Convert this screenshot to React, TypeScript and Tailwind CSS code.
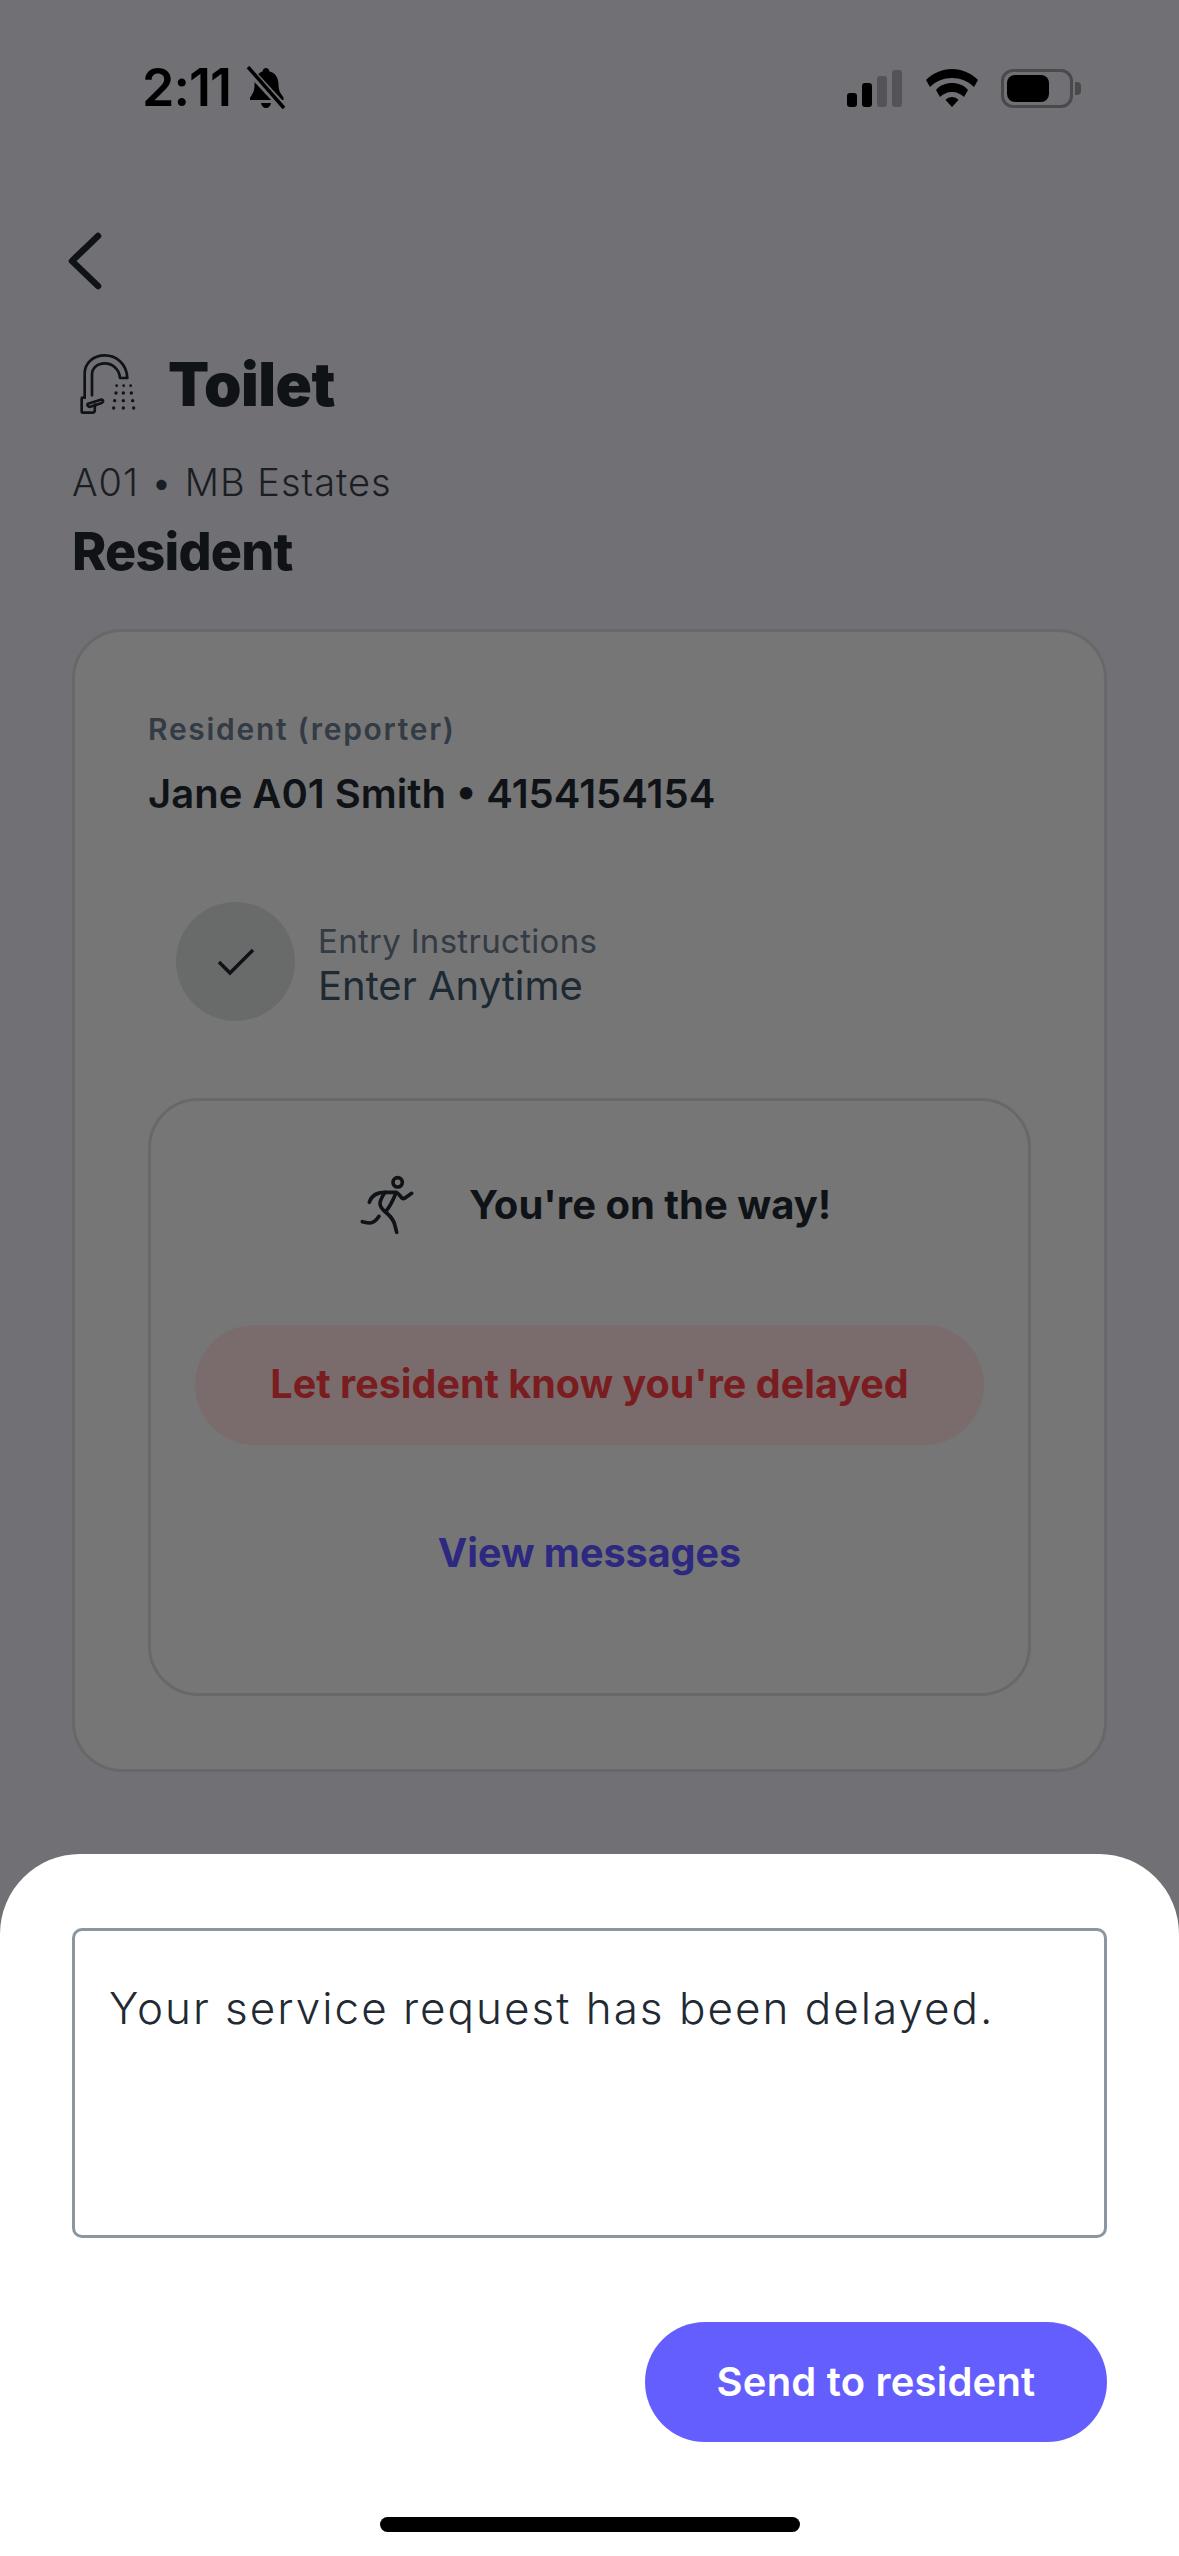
function BellOff() {
  return (
    <svg width="42" height="44" viewBox="0 0 42 44" fill="none">
      <path d="M21 2c2 0 3 1.500 3.500 3.500C31 7 33.500 12.500 33.500 19c0 5 1.500 8 5 12.500V34H5v-2.500C8.500 27 9.500 24 9.500 19c0-6.500 3-12 8-13.500C18 3.500 19 2 21 2z" fill="#000" />
      <path d="M16 37h10c-.5 3-2.500 5-5 5s-4.500-2-5-5z" fill="#000" />
      <path d="M3 3l36 39" stroke="#717075" strokeWidth="8" />
      <path d="M3 1l36 41" stroke="#000" strokeWidth="3.500" />
    </svg>
  )
}

function StatusIcons() {
  return (
    <div className="flex items-center">
      <div className="flex items-end gap-[5px] h-[37px]">
        <div className="w-[10px] h-[14px] rounded-[3px] bg-black" />
        <div className="w-[10px] h-[24px] rounded-[3px] bg-black" />
        <div className="w-[10px] h-[31px] rounded-[3px] bg-[#545458]" />
        <div className="w-[10px] h-[37px] rounded-[3px] bg-[#545458]" />
      </div>
      <svg className="ml-[24px]" width="52" height="38" viewBox="0 0 52 38" fill="#000">
        <path d="M26 0c10 0 19 4 26 11l-4 7C42 12 34 9 26 9S10 12 4 18l-4-7C7 4 16 0 26 0z" />
        <path d="M26 14c6 0 12 2 16 7l-4 7c-3-3-7-5-12-5s-9 2-12 5l-4-7c4-5 10-7 16-7z" />
        <path d="M26 28c2.500 0 5 1 6.500 3L26 38l-6.500-7c1.500-2 4-3 6.500-3z" />
      </svg>
      <div className="ml-[23px] flex items-center">
        <div className="w-[72px] h-[39px] rounded-[12px] border-[3px] border-[#4a4a4d] p-[3px]">
          <div className="w-[42px] h-full rounded-[8px] bg-black" />
        </div>
        <div className="ml-[2px] w-[6px] h-[13px] rounded-r-[4px] bg-[#4a4a4d]" />
      </div>
    </div>
  )
}

function BackChevron() {
  return (
    <svg width="36" height="58" viewBox="0 0 36 58" fill="none" stroke="#0f1317" strokeWidth="6.500" strokeLinecap="round" strokeLinejoin="round">
      <path d="M31 4L5 29l26 25" />
    </svg>
  )
}

function FaucetIcon() {
  return (
    <svg width="60" height="64" viewBox="110 75 180 192" fill="none" stroke="#0f1317" strokeWidth="8" strokeLinecap="round" strokeLinejoin="round">
      <path d="M130 212V140c0-32 26-55 60-55s66 24 68 68h-22c-2-26-22-44-46-44-22 0-38 14-38 34v62" />
      <path d="M130 212h-6c-2 0-3 1-3 3v38c0 2 1 4 4 4h30c2 0 4-2 5-4l1-20" />
      <path d="M140 230l38-12c5-1 8 2 7 5-1 3-3 5-6 6l-32 10c-6 2-12-6-7-9z" />
      <g fill="#0f1317" stroke="none">
        <circle cx="226" cy="176" r="4" /><circle cx="247" cy="176" r="4" /><circle cx="268" cy="176" r="4" />
        <circle cx="224" cy="198" r="5" /><circle cx="246" cy="198" r="5" /><circle cx="270" cy="198" r="5" />
        <circle cx="220" cy="221" r="5" /><circle cx="246" cy="221" r="5" /><circle cx="274" cy="221" r="5" />
        <circle cx="217" cy="243" r="5" /><circle cx="246" cy="243" r="5" /><circle cx="277" cy="243" r="5" />
      </g>
    </svg>
  )
}

function RunnerIcon() {
  return (
    <svg width="58" height="62" viewBox="112 75 174 186" fill="none" stroke="#0f1317" strokeWidth="11" strokeLinecap="round" strokeLinejoin="round">
      <circle cx="228" cy="100" r="14" />
      <path d="M143 160c6-20 22-30 47-30h32c6 0 10 6 16 14 4 5 8 6 12 3l20-14" />
      <path d="M190 130c-8 12-15 24-15 34 0 12 10 20 20 28 14 12 22 22 25 38l5 20" />
      <path d="M222 134c-8 20-18 40-30 54" />
      <path d="M172 202c-8 12-16 20-28 20-8 0-14-2-22-4" />
    </svg>
  )
}

export default function App() {
  return (
    <div className="relative w-[1179px] h-[2556px] overflow-hidden bg-[#717075] font-['Inter',sans-serif] text-[#0f1317]">
      <div className="flex items-center justify-between pl-[142px] pr-[98px] pt-[66px]">
        <div className="flex items-center gap-[14px]">
          <span className="font-semibold text-[52px] leading-[44px] tracking-[-1px] text-black">2:11</span>
          <BellOff />
        </div>
        <StatusIcons />
      </div>

      <div className="px-[72px]">
        <div className="mt-[122px] -ml-[5px]">
          <BackChevron />
        </div>

        <div className="mt-[62px] flex items-center gap-[30px] pl-[6px]">
          <FaucetIcon />
          <h1 className="font-black text-[60px] leading-[64px] tracking-[-0.5px]">Toilet</h1>
        </div>
        <p className="mt-[43px] text-[38px] leading-[46px] font-light tracking-[1px] text-[#1a1e23]">A01 • MB Estates</p>
        <h2 className="mt-[19px] font-extrabold text-[52px] leading-[56px] tracking-[-0.8px]">Resident</h2>

        <div className="mt-[49px] h-[1143px] rounded-[50px] border-[3px] border-[#67686a] bg-[#767676] px-[73px] pt-[78px]">
          <p className="font-semibold text-[30px] leading-[38px] tracking-[1.700px] text-[#333b45]">Resident (reporter)</p>
          <p className="mt-[22px] font-semibold text-[40px] leading-[48px]">Jane A01 Smith • 4154154154</p>

          <div className="mt-[84px] ml-[28px] flex items-center gap-[23px]">
            <div className="flex items-center justify-center w-[119px] h-[119px] rounded-full bg-[#696b6a]">
              <svg width="38" height="28" viewBox="0 0 38 28" fill="none" stroke="#0f1317" strokeWidth="3.500">
                <path d="M2 14l11 11L36 2" />
              </svg>
            </div>
            <div className="pt-[5px]">
              <p className="text-[33px] leading-[44px] tracking-[0.3px] text-[#333b45]">Entry Instructions</p>
              <p className="text-[40px] leading-[46px] text-[#1d2933]">Enter Anytime</p>
            </div>
          </div>

          <div className="mt-[77px] h-[598px] rounded-[50px] border-[3px] border-[#67686a] px-[44px] pt-[73px]">
            <div className="flex items-center pl-[164px] gap-[52px]">
              <RunnerIcon />
              <span className="font-bold text-[40px] leading-[50px]">You're on the way!</span>
            </div>
            <div className="mt-[89px] flex items-center justify-center h-[120px] rounded-full bg-[#7a6c6d] font-bold text-[39.500px] text-[#7a1d20]">
              Let resident know you're delayed
            </div>
            <p className="mt-[83px] text-center font-bold text-[39.500px] leading-[50px] text-[#2d2880]">View messages</p>
          </div>
        </div>
      </div>

      {/* bottom sheet */}
      <div className="absolute inset-x-0 bottom-0 h-[702px] rounded-t-[80px] bg-white px-[72px] pt-[74px]">
        <div className="h-[310px] rounded-[10px] border-[3px] border-[#8a96a0] px-[34px] pt-[49px] text-[44px] leading-[56px] font-light tracking-[2px] text-[#1f2a33]">
          Your service request has been delayed.
        </div>
        <div className="mt-[84px] flex justify-end">
          <div className="flex items-center justify-center w-[462px] h-[120px] rounded-full bg-[#645eff] font-semibold text-[40px] tracking-[0.2px] text-white">
            Send to resident
          </div>
        </div>
        <div className="mt-[75px] mx-auto w-[420px] h-[15px] rounded-full bg-black" />
      </div>
    </div>
  )
}
